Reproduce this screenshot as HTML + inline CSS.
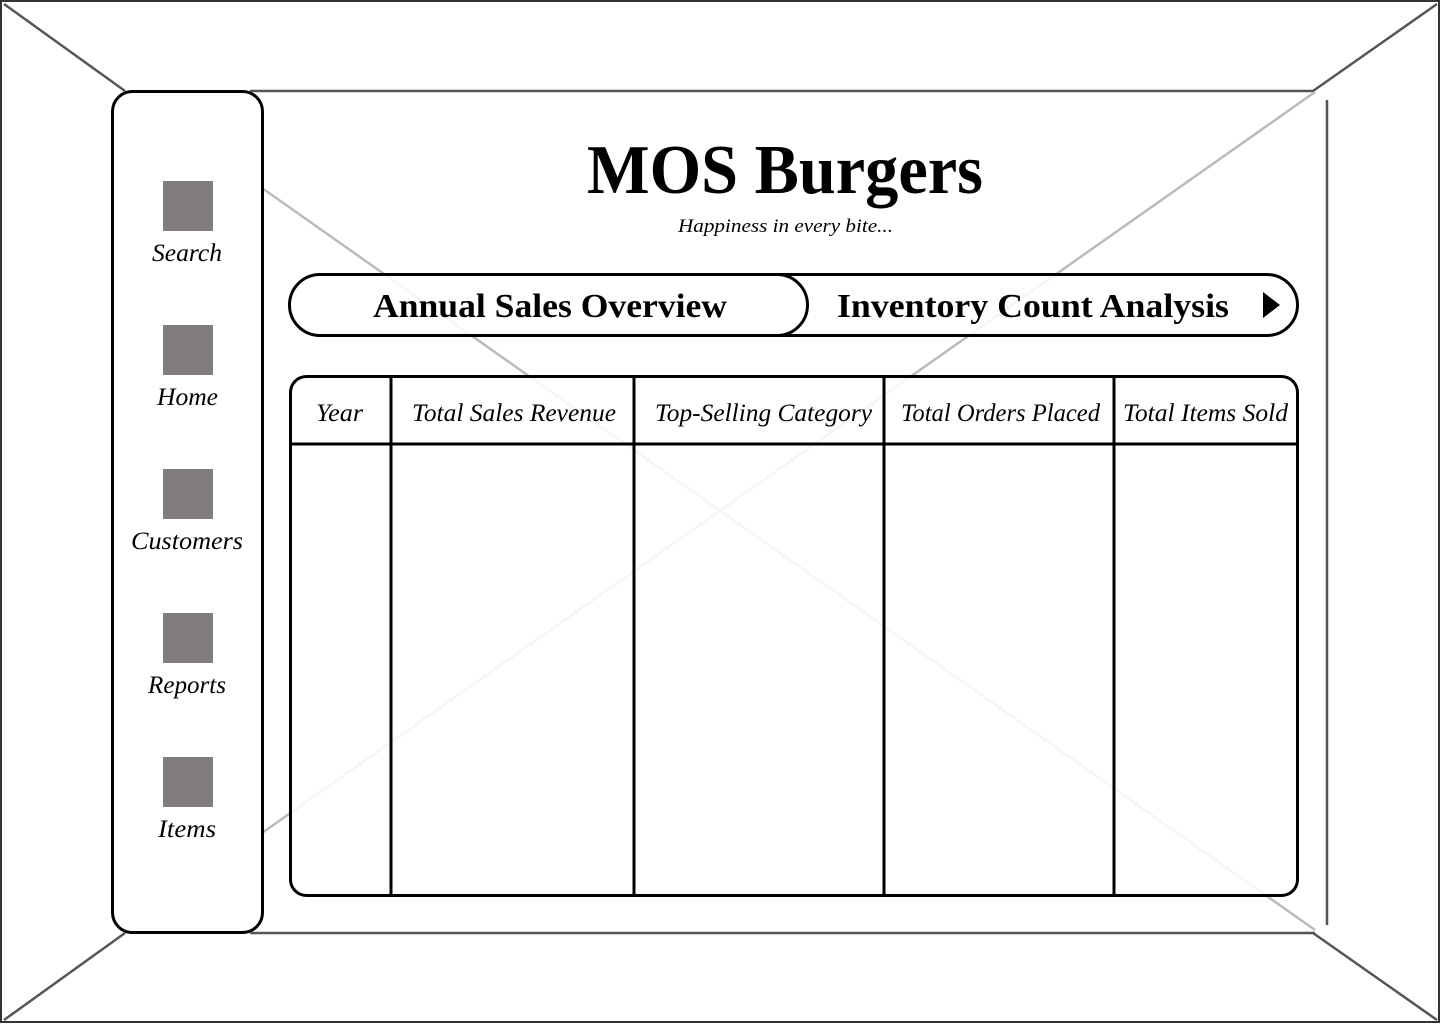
<!DOCTYPE html>
<html><head><meta charset="utf-8"><style>
html,body{margin:0;padding:0;background:#fff;}
svg{display:block}
.t{font-family:"Liberation Serif",serif;font-style:italic;fill:#000}
.b{font-family:"Liberation Serif",serif;font-weight:bold;fill:#000}
</style></head><body>
<svg width="1440" height="1024" viewBox="0 0 1440 1024" xmlns="http://www.w3.org/2000/svg">
<rect x="1" y="1" width="1438" height="1021" fill="#fff" stroke="#333" stroke-width="2"/>
<g stroke="#555" stroke-width="2.5" fill="none">
<line x1="4" y1="4" x2="125" y2="91"/>
<line x1="1437" y1="4" x2="1313" y2="91"/>
<line x1="4" y1="1020" x2="125" y2="933"/>
<line x1="1437" y1="1020" x2="1313" y2="933"/>
<line x1="250" y1="91" x2="1315" y2="91"/>
<line x1="250" y1="933" x2="1315" y2="933"/>
<line x1="1327" y1="100" x2="1327" y2="925"/>
</g>
<g stroke="#bbb" stroke-width="2.5">
<line x1="1315" y1="92" x2="262" y2="833"/>
<line x1="262" y1="188" x2="1315" y2="930"/>
</g>
<rect x="112.5" y="91.5" width="150" height="841" rx="20" fill="#fff" stroke="#000" stroke-width="3"/>
<g fill="#807c7c">
<rect x="163" y="181" width="50" height="50"/>
<rect x="163" y="325" width="50" height="50"/>
<rect x="163" y="469" width="50" height="50"/>
<rect x="163" y="613" width="50" height="50"/>
<rect x="163" y="757" width="50" height="50"/>
</g>
<g class="t" font-size="25">
<text x="152" y="261" textLength="70" lengthAdjust="spacingAndGlyphs">Search</text>
<text x="157" y="405" textLength="61" lengthAdjust="spacingAndGlyphs">Home</text>
<text x="131" y="549" textLength="112" lengthAdjust="spacingAndGlyphs">Customers</text>
<text x="148" y="693" textLength="78" lengthAdjust="spacingAndGlyphs">Reports</text>
<text x="158" y="837" textLength="58" lengthAdjust="spacingAndGlyphs">Items</text>
</g>
<text class="b" x="587" y="193" font-size="70" textLength="396" lengthAdjust="spacingAndGlyphs">MOS Burgers</text>
<text class="t" x="678" y="232" font-size="19" textLength="215" lengthAdjust="spacingAndGlyphs">Happiness in every bite...</text>
<rect x="289.5" y="274.5" width="1008" height="61" rx="30.5" fill="#fff" fill-opacity="0.85" stroke="#000" stroke-width="3"/>
<path d="M320 274.5 H777 A30.5 30.5 0 0 1 777 335.5 H320" fill="none" stroke="#000" stroke-width="3"/>
<text class="b" x="373" y="317" font-size="34" textLength="354" lengthAdjust="spacingAndGlyphs">Annual Sales Overview</text>
<text class="b" x="837" y="317" font-size="34" textLength="392" lengthAdjust="spacingAndGlyphs">Inventory Count Analysis</text>
<polygon points="1263,292 1280,305 1263,318" fill="#000"/>
<rect x="290.5" y="376.5" width="1007" height="519" rx="16" fill="#fff" fill-opacity="0.85" stroke="#000" stroke-width="3"/>
<g stroke="#000" stroke-width="3">
<line x1="290" y1="444" x2="1298" y2="444"/>
<line x1="391" y1="377" x2="391" y2="895"/>
<line x1="634" y1="377" x2="634" y2="895"/>
<line x1="884" y1="375" x2="884" y2="895"/>
<line x1="1114" y1="377" x2="1114" y2="895"/>
</g>
<g class="t" font-size="25">
<text x="316" y="421" textLength="47" lengthAdjust="spacingAndGlyphs">Year</text>
<text x="412" y="421" textLength="204" lengthAdjust="spacingAndGlyphs">Total Sales Revenue</text>
<text x="655" y="421" textLength="217" lengthAdjust="spacingAndGlyphs">Top-Selling Category</text>
<text x="901" y="421" textLength="199" lengthAdjust="spacingAndGlyphs">Total Orders Placed</text>
<text x="1123" y="421" textLength="165" lengthAdjust="spacingAndGlyphs">Total Items Sold</text>
</g>
</svg>
</body></html>
